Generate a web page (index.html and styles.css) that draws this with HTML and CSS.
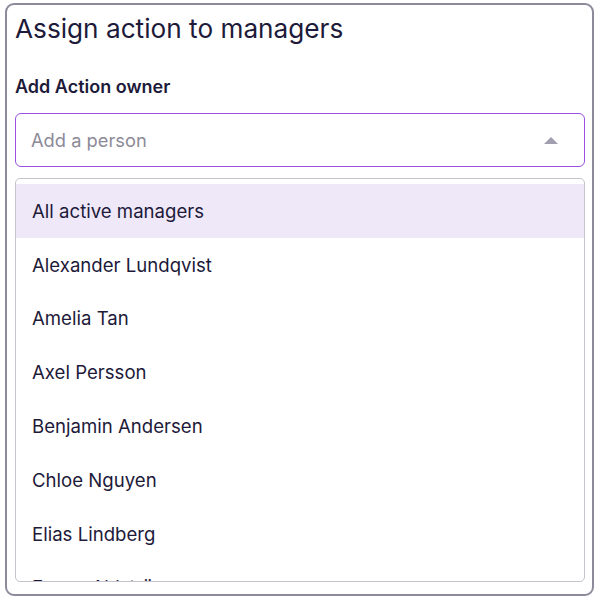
FILE: index.html
```html
<!DOCTYPE html>
<html>
<head>
<meta charset="utf-8">
<link rel="stylesheet" href="styles.css">
</head>
<body>
<div class="card">
  <h1 class="title">Assign action to managers</h1>
  <div class="label">Add Action owner</div>
  <div class="select">
    <span class="placeholder">Add a person</span>
    <span class="caret"></span>
  </div>
  <div class="menu">
    <div class="option active">All active managers</div>
    <div class="option">Alexander Lundqvist</div>
    <div class="option">Amelia Tan</div>
    <div class="option">Axel Persson</div>
    <div class="option">Benjamin Andersen</div>
    <div class="option">Chloe Nguyen</div>
    <div class="option">Elias Lindberg</div>
    <div class="option">Emma Ahlström</div>
  </div>
</div>
</body>
</html>
```

FILE: styles.css
```css
html, body {
  margin: 0;
  padding: 0;
  background: #ffffff;
}
body {
  font-family: Inter, "Noto Sans", sans-serif;
  color: #1d1a3a;
}
.card {
  box-sizing: border-box;
  margin: 3px 0 0 5px;
  width: 589px;
  height: 593px;
  border: 2px solid #8d8a9c;
  border-radius: 9px;
  padding: 8px 7px 0 8px;
  overflow: hidden;
}
.title {
  margin: 0;
  font-size: 26.2px;
  font-weight: 400;
  line-height: 32px;
  color: #1d1a3a;
}
.label {
  margin-top: 30px;
  font-size: 18px;
  font-weight: 600;
  line-height: 24px;
}
.select {
  box-sizing: border-box;
  margin-top: 14px;
  height: 54px;
  border: 1.5px solid #9b51e0;
  border-radius: 6px;
  display: flex;
  align-items: center;
  justify-content: space-between;
  padding: 0 26px 0 15px;
}
.placeholder {
  font-size: 18.3px;
  color: #8d8a98;
}
.caret {
  width: 0;
  height: 0;
  border-left: 7px solid transparent;
  border-right: 7px solid transparent;
  border-bottom: 7px solid #a19eb0;
}
.menu {
  box-sizing: border-box;
  margin-top: 11px;
  height: 404px;
  border: 1px solid #c6c3cf;
  border-radius: 5px;
  padding-top: 5px;
  overflow: hidden;
}
.option {
  height: 53.8px;
  display: flex;
  align-items: center;
  padding-left: 16px;
  font-size: 18.6px;
  color: #1d1a3a;
}
.option.active {
  background: #efe8f9;
}
```
